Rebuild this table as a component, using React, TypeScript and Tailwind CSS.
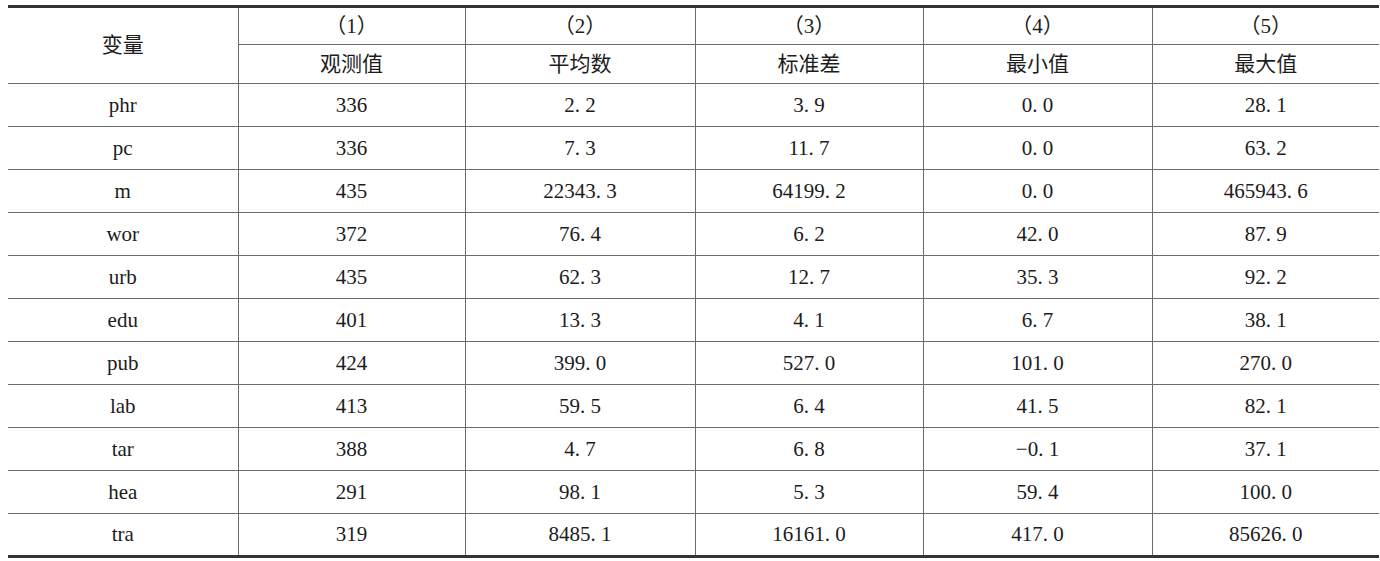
const rows: string[][] = [
  ['phr', '336', '2. 2', '3. 9', '0. 0', '28. 1'],
  ['pc', '336', '7. 3', '11. 7', '0. 0', '63. 2'],
  ['m', '435', '22343. 3', '64199. 2', '0. 0', '465943. 6'],
  ['wor', '372', '76. 4', '6. 2', '42. 0', '87. 9'],
  ['urb', '435', '62. 3', '12. 7', '35. 3', '92. 2'],
  ['edu', '401', '13. 3', '4. 1', '6. 7', '38. 1'],
  ['pub', '424', '399. 0', '527. 0', '101. 0', '270. 0'],
  ['lab', '413', '59. 5', '6. 4', '41. 5', '82. 1'],
  ['tar', '388', '4. 7', '6. 8', '−0. 1', '37. 1'],
  ['hea', '291', '98. 1', '5. 3', '59. 4', '100. 0'],
  ['tra', '319', '8485. 1', '16161. 0', '417. 0', '85626. 0'],
];

const heads = [
  ['（1）', '观测值'],
  ['（2）', '平均数'],
  ['（3）', '标准差'],
  ['（4）', '最小值'],
  ['（5）', '最大值'],
];

export default function App() {
  return (
    <div className="bg-white w-[1380px] h-[561px] pt-[5px] pl-[8px] font-['Liberation_Serif','Noto_Sans_CJK_SC',serif] text-[21px] text-[#1c1c1c]">
      <table className="w-[1371px] table-fixed border-collapse border-t-[3px] border-b-[3px] border-[#333]">
        <colgroup>
          <col className="w-[230px]" />
          <col className="w-[227px]" />
          <col className="w-[230px]" />
          <col className="w-[228px]" />
          <col className="w-[229px]" />
          <col className="w-[227px]" />
        </colgroup>
        <thead>
          <tr className="h-[38px]">
            <th rowSpan={2} className="font-normal text-center align-middle border-r border-b border-[#6b6b6b]">
              变量
            </th>
            {heads.map((h, i) => (
              <th
                key={h[0]}
                className={`font-normal text-center align-middle leading-none border-b border-[#6b6b6b] ${i < 4 ? 'border-r' : ''}`}
              >
                {h[0]}
              </th>
            ))}
          </tr>
          <tr className="h-[39px]">
            {heads.map((h, i) => (
              <th
                key={h[1]}
                className={`font-normal text-center align-middle leading-none border-b border-[#6b6b6b] ${i < 4 ? 'border-r' : ''}`}
              >
                {h[1]}
              </th>
            ))}
          </tr>
        </thead>
        <tbody>
          {rows.map((r, ri) => (
            <tr key={r[0]} className="h-[43px]">
              {r.map((c, ci) => (
                <td
                  key={ci}
                  className={`text-center align-middle leading-none border-[#6b6b6b] ${ci < 5 ? 'border-r' : ''} ${ri < rows.length - 1 ? 'border-b' : ''}`}
                >
                  {c}
                </td>
              ))}
            </tr>
          ))}
        </tbody>
      </table>
    </div>
  );
}
